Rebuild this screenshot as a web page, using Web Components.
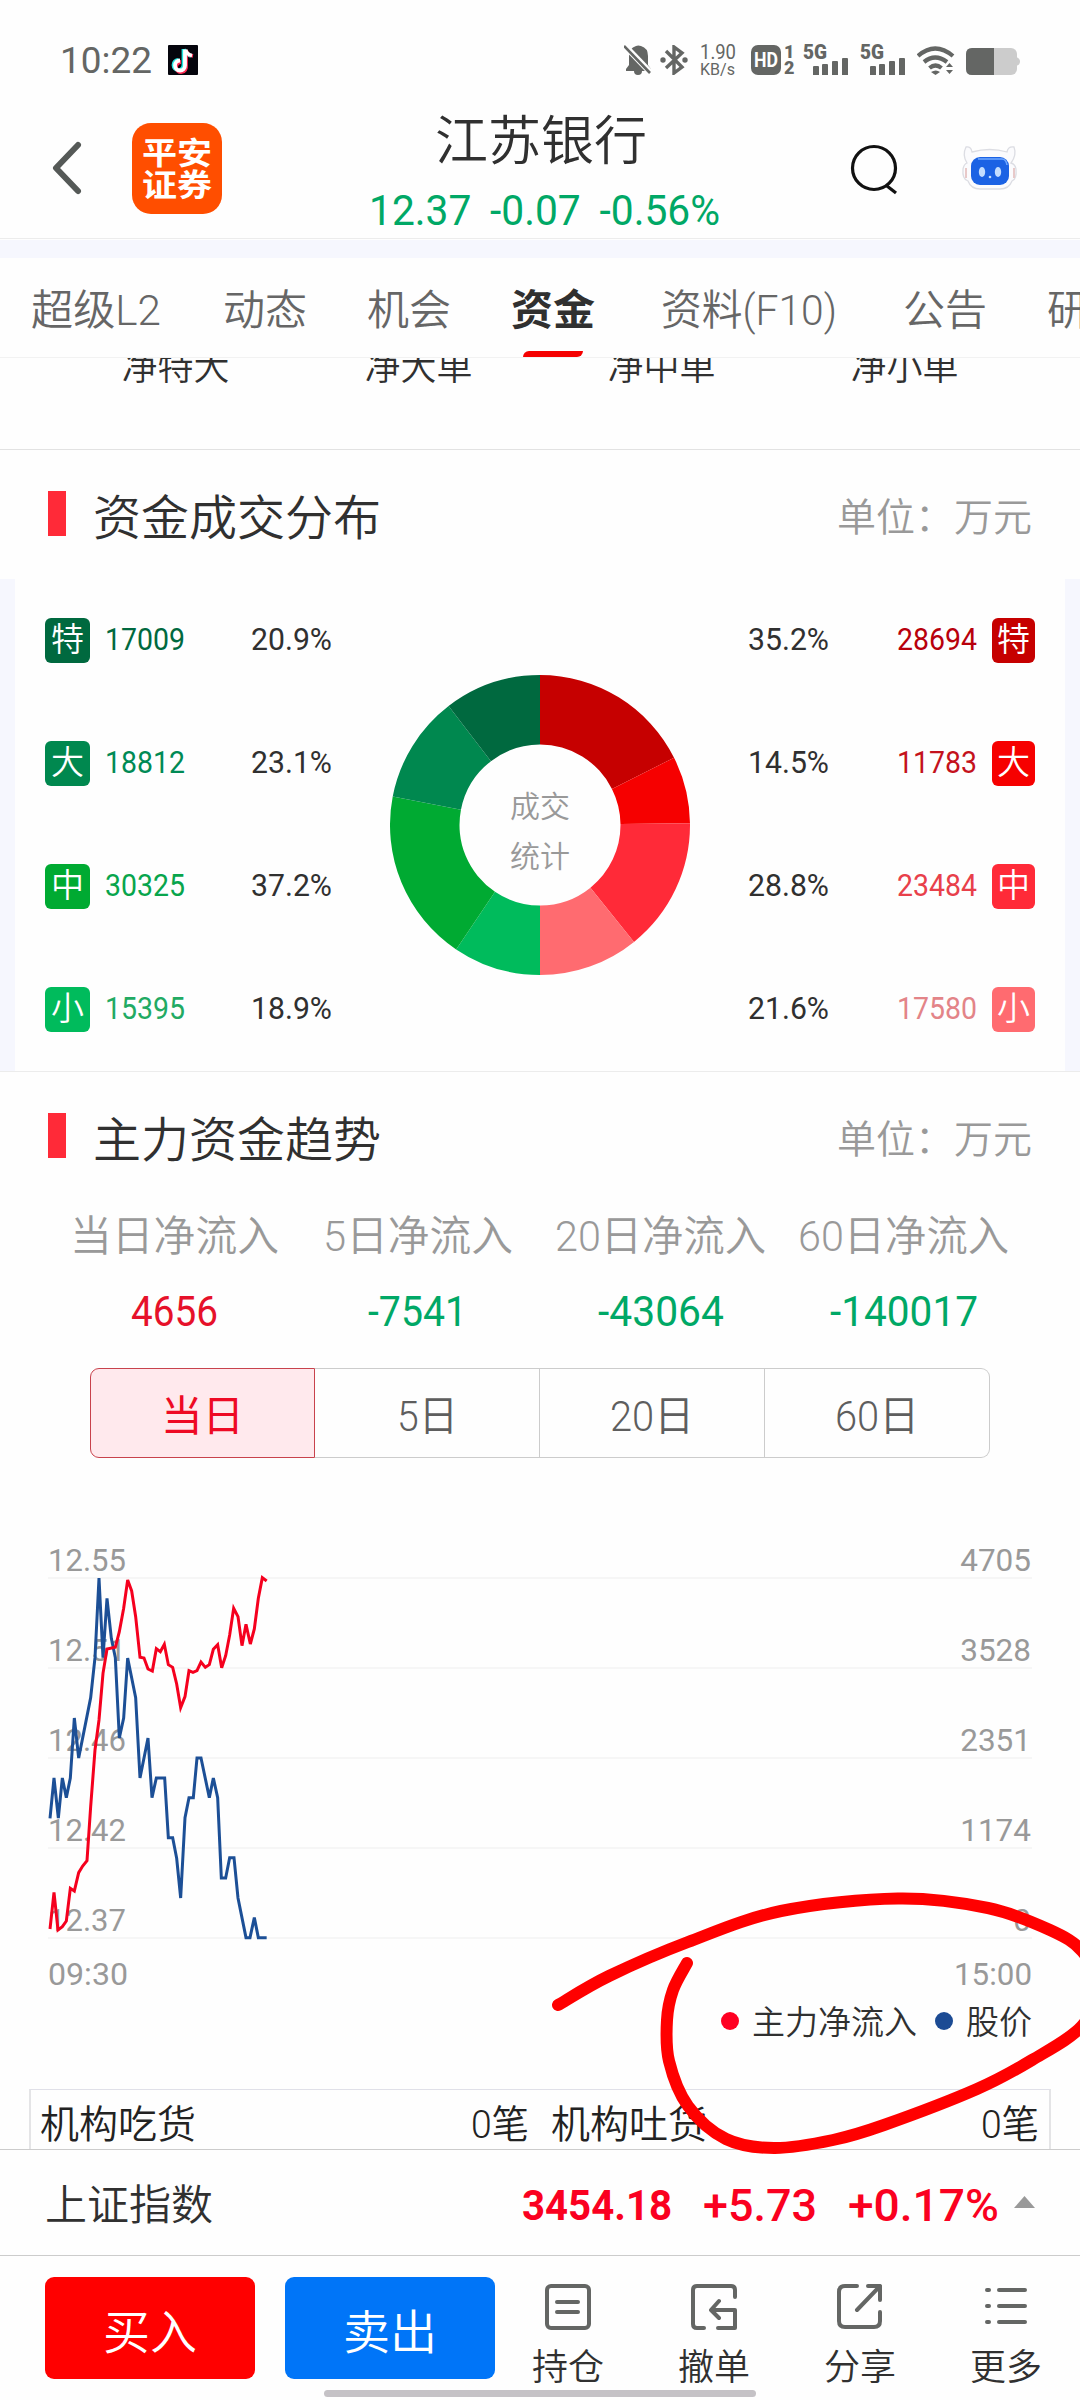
<!DOCTYPE html>
<html lang="zh-CN">
<head>
<meta charset="utf-8">
<title>江苏银行</title>
<style>
html,body{margin:0;padding:0}
body{width:1080px;height:2400px;overflow:hidden;background:#fefefe;color:#303030;
font-family:Roboto,"Noto Sans CJK SC",sans-serif;font-weight:350;line-height:1}
</style>
</head>
<body>
<stock-page></stock-page>
<script>
class BaseElement extends HTMLElement{
constructor(){
  super();
  this.attachShadow({mode:'open'});
}
connectedCallback(){
  this.shadowRoot.innerHTML=`<style>:host{display:block}*{box-sizing:border-box}${this.css()}</style>${this.html()}`;
  this.ready();
}
css(){return ''}
html(){return '<slot></slot>'}
ready(){}
attr(name,def=''){return this.getAttribute(name)||def}
}

// one line of text squeezed or stretched to the width given in "w"
class FitText extends BaseElement{
css(){return `:host{display:block;flex:none;white-space:nowrap;width:${this.attr('w')}px}
span{display:inline-block;transform-origin:0 50%}`}
html(){return '<span><slot></slot></span>'}
ready(){
  const el=this.shadowRoot.querySelector('span');
  const w=el.getBoundingClientRect().width;
  if(w>0)el.style.transform=`scaleX(${Number(this.attr('w'))/w})`;
}
}

class StatusBar extends BaseElement{
css(){return `:host{height:102px;padding:0 60px 0 60px;color:#646664}
.row{display:flex;align-items:flex-start;padding-top:45px}
.time{font-size:37px;line-height:32px;font-weight:400;margin-right:16px}
svg{display:block;flex:none}
.icons{margin-left:auto;display:flex;align-items:flex-start}
.speed{width:38px;margin:0 13px 0 12px;font-size:20px;line-height:15px;font-weight:400}
.speed fit-text+fit-text{font-size:17px;margin-top:2px;line-height:15px}
.hd{display:flex;margin-right:10px}
.hd b{width:30px;height:30px;border-radius:7px;background:#646664;color:#fff;font-size:20px;line-height:31px;padding-left:3px}
.hd div{font-size:18px;font-weight:900;line-height:16px;margin:-1px 0 0 3px;width:9px}
.net{width:45px;margin-right:12px}
.net b{display:block;font-size:20px;line-height:15px;font-weight:900}
.net svg{margin:-2px 0 0 10px}`}
html(){
  const net=`<div class="net"><b><fit-text w="24">5G</fit-text></b><svg width="36" height="17"><path fill="#646664" d="M0 9q0-1 1-1h4q1 0 1 1v8h-6zM9 7q0-1 1-1h4q1 0 1 1v10h-6zM19 4q0-1 1-1h4q1 0 1 1v13h-6zM29 1q0-1 1-1h4q1 0 1 1v16h-6z"/></svg></div>`;
  return `<div class="row"><fit-text class="time" w="92">10:22</fit-text>
<svg width="30" height="30"><rect width="30" height="30" rx="1" fill="#05050d"/>
<g fill="none" stroke-width="3.800"><path stroke="#25e8e4" d="M15.500 4v16a5 5 0 1 1-5-5M16 4q1 6 7 7"/><path stroke="#fe2c55" d="M18 6v15a5 5 0 1 1-5-4M18 5q1 5 7 6" /><path stroke="#fff" d="M17 4.500v16a5 5 0 1 1-5-5M17.500 4.500q1 5 6.500 6"/></g></svg>
<div class="icons">
<svg width="28" height="30" fill="#646664"><path d="M2 26v-2l3-4v-9q0-8 7-10 2-1 5 0 7 2 7 10v9l3 4v2h-9q0 4-4 4t-4-4z"/><path d="M1 1l26 27" stroke="#fefefe" stroke-width="6"/><path d="M0 1l26 27" stroke="#646664" stroke-width="2.600"/></svg>
<svg width="28" height="30" style="margin-left:8px" fill="none" stroke="#646664" stroke-width="3.400"><path d="M6 6l16 16-8 6V2l8 6L6 23"/><circle cx="3" cy="15" r="2.700" fill="#646664" stroke="none"/><circle cx="25" cy="15" r="2.700" fill="#646664" stroke="none"/></svg>
<div class="speed"><fit-text w="36">1.90</fit-text><fit-text w="35">KB/s</fit-text></div>
<div class="hd"><b><fit-text w="24">HD</fit-text></b><div>1<br>2</div></div>
${net}${net}
<svg width="38" height="30"><g fill="none" stroke="#646664" stroke-width="4.200"><path d="M1 11q17-15 35 0"/><path d="M7 17q11-9 23 0"/><path d="M12.500 23q6-5 12 0"/></g><path fill="#646664" d="M14 27q5-3 9 0l-4.500 3zM29 22l3.500-4 3.500 4zM29 25h7l-3.500 4z"/></svg>
<svg width="54" height="28" style="margin:3px 0 0 11px"><rect width="51" height="27" rx="6" fill="#ccc"/><path fill="#ccc" d="M50 9q4 1 4 4.500t-4 4.500z"/><path fill="#646664" d="M6 0h22v27H6q-6 0-6-6V6q0-6 6-6z"/></svg>
</div></div>`}
}

class StockHeader extends BaseElement{
css(){return `:host{height:156px;border-bottom:18px solid #f6f7fe;box-sizing:border-box}
.row{display:flex;height:137px;padding-left:50px;border-bottom:1px solid #ececec}
svg{display:block;flex:none;overflow:visible}
.logo{width:90px;height:91px;margin:21px 147px 0 49px;border-radius:19px;background:#ff4e00;color:#fff;font-size:31px;line-height:32px;font-weight:700;padding:15px 10px}
.mid{width:350px;display:flex;flex-direction:column;align-items:center}
.name{font-size:53px;line-height:56px;margin:12px 6px 0 0}
.price{font-size:42px;line-height:42px;margin-top:20px;color:#00a866;font-weight:400;word-spacing:9px}`}
html(){return `<div class="row">
<svg width="33" height="60" style="margin-top:36px"><path d="M28 7L6 30l22 23" fill="none" stroke="#555957" stroke-width="6" stroke-linecap="round" stroke-linejoin="round"/></svg>
<div class="logo"><fit-text w="70">平安</fit-text><fit-text w="70">证券</fit-text></div>
<div class="mid"><div class="name">江苏银行</div><fit-text class="price" w="351">12.37 -0.07 -0.56%</fit-text></div>
<svg width="50" height="52" style="margin:47px 0 0 131px" fill="none" stroke="#111" stroke-width="3.200"><circle cx="24" cy="19" r="21.500"/><path d="M37 37l9 7"/></svg>
<svg width="54" height="44" style="margin:44px 0 0 63px"><path d="M3 1q5-1 6 5 18-5 35 0 1-6 7-5 3 8-3 16 4 1 5 6 1 10-4 12-3 8-12 8H17q-9 0-12-8-6-2-5-12 1-5 4-6-5-8-1-16z" fill="#fbfbfd" stroke="#dcdde3" stroke-width="1.300"/><path d="M3 22v10M51 22v10" stroke="#e8c9c9" stroke-width="2"/><rect x="8" y="11" width="38" height="28" rx="9" fill="#1b62e4"/><path d="M15 13h24q4 0 5 6" stroke="#6fa8ff" fill="none" stroke-width="1.500"/><ellipse cx="19" cy="26" rx="3.200" ry="5" fill="#c3ddff"/><ellipse cx="35" cy="26" rx="3.200" ry="5" fill="#c3ddff"/><circle cx="27" cy="31" r="1.300" fill="#c3ddff"/></svg>
</div>`}
}

class TabBar extends BaseElement{
css(){return `:host{height:100px;box-sizing:border-box;border-bottom:1px solid #f2f2f2;overflow:hidden}
nav{display:flex;padding-left:31px;width:1200px}
div{flex:none;height:99px;padding-top:32px;font-size:42px;color:#666;display:flex;flex-direction:column}
.on{color:#303030;font-weight:700}
i{width:60px;height:6px;margin:19px 0 0 12px;background:#f50000;border-radius:6px 0 6px 0}`}
html(){
  const tabs=[['超级L2',130,62],['动态',84,60],['机会',84,60],['资金',84,66],['资料(F10)',176,66],['公告',84,60],['研报',84,0]];
  return `<nav>${tabs.map(([t,w,m],i)=>`<div style="margin-right:${m}px" ${i===3?'class="on"':''}><fit-text w="${w}">${t}</fit-text>${i===3?'<i></i>':''}</div>`).join('')}</nav>`}
}

class NetLabels extends BaseElement{
css(){return `:host{height:92px;box-sizing:border-box;overflow:hidden;border-bottom:1px solid #e2e2e2}
.row{display:grid;grid-template-columns:repeat(4,243px);padding-left:54px;margin-top:-8px;text-align:center;font-size:36px;line-height:36px}`}
html(){return `<div class="row">${['净特大','净大单','净中单','净小单'].map(t=>`<span>${t}</span>`).join('')}</div>`}
}

class SectionHead extends BaseElement{
css(){return `:host{height:129px;padding:41px 48px 0 48px;box-sizing:border-box}
.row{display:flex;align-items:center;height:54px}
i{width:18px;height:45px;background:#ff2a38;margin:-9px 27px 0 0}
b{font-size:48px;font-weight:inherit;padding-top:1px}
span{margin-left:auto;font-size:39px;color:#999}`}
html(){return `<div class="row"><i></i><b><slot></slot></b><span>单位：万元</span></div>`}
}

class DealRow extends BaseElement{
css(){return `:host{display:flex;align-items:center;height:45px;font-size:31px;font-weight:400;color:#303030}
:host([side=right]){flex-direction:row-reverse}
i{font-style:normal;width:45px;height:45px;border-radius:6px;background:var(--c);color:#fff;font-size:33px;line-height:44px;text-align:center;font-weight:350}
fit-text{margin-top:-2px}
.n{color:var(--n,var(--c));margin-left:15px;margin-right:15px}
.p{margin-left:51px}
:host([side=right]) .p{margin:-2px 53px 0 0}`}
html(){return `<i>${this.attr('tag')}</i><fit-text class="n" w="80">${this.attr('n')}</fit-text><fit-text class="p" w="81">${this.attr('p')}</fit-text>`}
}

class DonutChart extends BaseElement{
css(){return `svg{display:block}text{font-size:30px;fill:#999;text-anchor:middle}`}
html(){
  const data=[[28694,'#c60000'],[11783,'#f60000'],[23484,'#ff2a38'],[17580,'#ff6b70'],[15395,'#00bb5c'],[30325,'#00aa32'],[18812,'#00884f'],[17009,'#00693f']];
  const total=data.reduce((s,d)=>s+d[0],0);
  const pt=(r,a)=>`${(150+r*Math.sin(a)).toFixed(2)} ${(150-r*Math.cos(a)).toFixed(2)}`;
  let a=0;
  const arcs=data.map(([v,c])=>{
    const b=a+v/total*Math.PI*2;
    const d=`M${pt(150,a)}A150 150 0 0 1 ${pt(150,b)}L${pt(80.5,b)}A80.500 80.500 0 0 0 ${pt(80.5,a)}z`;
    a=b;
    return `<path d="${d}" fill="${c}"/>`;
  }).join('');
  return `<svg width="300" height="300">${arcs}<text x="150" y="142">成交</text><text x="150" y="192">统计</text></svg>`}
}

class DealDistribution extends BaseElement{
css(){return `:host{height:493px;box-sizing:border-box;border-bottom:1px solid #ececec}
.box{display:flex;height:492px;border:solid #f6f7fe;border-width:0 15px;padding:39px 30px 0}
.col{width:287px;display:flex;flex-direction:column;gap:78px}
donut-chart{margin:57px 58px 0}`}
html(){
  const row=(side,[tag,n,p,c,t])=>`<deal-row side="${side}" tag="${tag}" n="${n}" p="${p}" style="--c:${c};--n:${t}"></deal-row>`;
  const sell=[['特','17009','20.9%','#00693f','#00693f'],['大','18812','23.1%','#00884f','#008a55'],['中','30325','37.2%','#00aa32','#08a54c'],['小','15395','18.9%','#00bb5c','#22aa63']];
  const buy=[['特','28694','35.2%','#c60000','#b8000c'],['大','11783','14.5%','#f60000','#c4121c'],['中','23484','28.8%','#ff2a38','#e8404a'],['小','17580','21.6%','#ff6b70','#e38488']];
  return `<div class="box"><div class="col">${sell.map(r=>row('left',r)).join('')}</div><donut-chart></donut-chart><div class="col">${buy.map(r=>row('right',r)).join('')}</div></div>`}
}

class FlowStats extends BaseElement{
css(){return `:host{height:167px}
.row{display:grid;grid-template-columns:repeat(4,243px);padding-left:53px}
.row>div{display:flex;flex-direction:column;align-items:center;font-size:42px;color:#999;padding-top:15px;gap:33px}
.v{color:#00a866;font-weight:400}
.up{color:#e6112a}`}
html(){
  const s=[['当日净流入',209,'4656',87],['5日净流入',190,'-7541',99],['20日净流入',211,'-43064',126],['60日净流入',211,'-140017',148]];
  return `<div class="row">${s.map(([l,w,v,vw],i)=>`<div><fit-text w="${w}">${l}</fit-text><fit-text class="v${i?'':' up'}" w="${vw}">${v}</fit-text></div>`).join('')}</div>`}
}

class SegmentControl extends BaseElement{
css(){return `:host{margin:0 90px}
.row{display:flex}
.row>div{width:225px;height:90px;border:1px solid #ccc;border-left-width:0;display:flex;justify-content:center;align-items:center;font-size:42px;color:#5e5e5e;padding-top:7px}
.row>.on{background:#ffe9ed;border:1px solid #c8424c;border-radius:9px 0 0 9px;color:#ee0a24;font-weight:400}
.row>:last-child{border-radius:0 9px 9px 0}`}
html(){return `<div class="row"><div class="on"><fit-text w="83">当日</fit-text></div><div><fit-text w="61">5日</fit-text></div><div><fit-text w="84">20日</fit-text></div><div><fit-text w="84">60日</fit-text></div></div>`}
}

class TrendChart extends BaseElement{
css(){return `:host{height:537px;padding-top:72px;box-sizing:border-box}
svg{display:block}
text{font-size:31.500px;fill:#999;font-weight:400}
.legend{display:flex;justify-content:flex-end;align-items:center;height:40px;margin:-8px 48px 0;font-size:33px}
.legend i{width:18px;height:18px;border-radius:9px;background:#ff0022;margin:-3px 13px 0 18px}
.legend i+span+i{background:#1c4b94}`}
html(){
  const left=['12.55','12.51','12.46','12.42','12.37'];
  const right=['4705','3528','2351','1174','0'];
  const grid=left.map((t,i)=>`<path d="M48 ${48+i*90}H1032" stroke="#f6f6f6" stroke-width="2"/>
<text x="48" y="${41+i*90}" textLength="78" lengthAdjust="spacingAndGlyphs">${t}</text><text x="1031" y="${41+i*90}" text-anchor="end">${right[i]}</text>`).join('');
  // both series in thirds of a pixel, counted from the top of the svg
  const price='150 865 162 744 175 864 187 744 199 803 211 744 223 564 236 684 272 503 285 383 297 144 309 383 321 205 334 325 346 383 358 624 371 564 383 384 407 503 420 744 444 624 456 803 469 744 494 744 505 923 518 923 530 985 542 1104 555 863 567 803 580 803 591 684 603 684 628 803 640 744 653 803 664 1044 677 1044 689 983 702 983 714 1104 738 1223 750 1223 763 1163 775 1223 800 1223';
  const flow='150 1197 162 1087 174 1200 187 1190 199 1173 211 1075 223 1083 236 1028 248 1008 261 992 272 830 285 660 297 570 309 430 321 357 346 352 358 305 371 235 383 150 395 183 407 260 420 382 432 384 444 417 457 423 469 356 481 365 493 343 505 404 518 412 530 462 542 533 555 500 567 422 579 427 591 422 603 396 616 412 628 404 640 358 653 344 665 413 677 377 689 315 701 235 714 260 726 347 738 283 751 342 763 297 775 205 787 143 800 153';
  return `<svg width="1080" height="480">${grid}
<text x="48" y="455" textLength="80" lengthAdjust="spacingAndGlyphs">09:30</text><text x="1032" y="455" text-anchor="end" textLength="78" lengthAdjust="spacingAndGlyphs">15:00</text>
<g transform="scale(.33333)" fill="none" stroke-width="9"><polyline points="${price}" stroke="#1c4f96"/><polyline points="${flow}" stroke="#f5001e"/></g></svg>
<div class="legend"><i></i><span>主力净流入</span><i></i><span>股价</span></div>`}
}

class OrgTable extends BaseElement{
css(){return `:host{height:154px;padding:94px 29px 0;box-sizing:border-box;overflow:hidden}
.row{display:flex;align-items:center;height:80px;border:2px solid #e4e4e6;border-top:1px solid #e0e0e8;font-size:39px;color:#222;padding:0 10px 6px 9px}
.gap{margin-left:auto}
.mid{margin-left:22px}`}
html(){return `<div class="row"><fit-text w="156">机构吃货</fit-text><fit-text class="gap" w="58">0笔</fit-text><fit-text class="mid" w="156">机构吐货</fit-text><fit-text class="gap" w="58">0笔</fit-text></div>`}
}

class IndexBar extends BaseElement{
css(){return `:host{height:107px;border:solid #ccc;border-width:1px 0;box-sizing:border-box;padding:0 45px 0 45px;background:#fefefe}
.row{display:flex;align-items:center;height:105px;padding-top:6px;font-size:42px}
.v{color:#fa0020;font-size:43px;font-weight:700;margin-left:auto}
.v.c{font-weight:500;margin-left:31px;font-size:44px}
svg{margin:-8px 0 0 15px}`}
html(){return `<div class="row"><span>上证指数</span><fit-text class="v" w="150">3454.18</fit-text><fit-text class="v c" w="114">+5.73</fit-text><fit-text class="v c" w="151">+0.17%</fit-text><svg width="21" height="12"><path d="M0 12L10.500 0 21 12z" fill="#999"/></svg></div>`}
}

class ActionBar extends BaseElement{
css(){return `:host{height:144px}
.row{display:flex;padding:21px 0 0 45px}
.btn{width:210px;height:102px;border-radius:9px;background:#f00;color:#fff;font-size:47px;line-height:112px;text-align:center;margin-right:30px;flex:none}
.sell{background:#0075f8;margin-right:0}
.item{width:146px;flex:none;display:flex;flex-direction:column;align-items:center;padding-top:7px;font-size:36px;gap:20px}
svg{display:block;fill:none;stroke:#646664;stroke-width:4;stroke-linecap:round;stroke-linejoin:round}`}
html(){
  const items=[
    ['持仓','<rect x="2" y="2" width="42" height="42" rx="4"/><path d="M12 18h21M12 28h21"/>'],
    ['撤单','<path d="M44 13V6q0-4-4-4H6Q2 2 2 6v34q0 4 4 4h7M27 44h17V26H21M28 17l-8 9 8 8"/>'],
    ['分享','<path d="M20 2H8Q2 2 2 8v29q0 6 6 6h29q6 0 6-6V28M31 2h12v14M43 2L20 26"/>'],
    ['更多','<path d="M4 6h2M16 6h26M4 22h2M16 22h26M4 38h2M16 38h26"/>']];
  return `<div class="row"><div class="btn">买入</div><div class="btn sell">卖出</div>${items.map(([t,p])=>`<div class="item"><svg width="46" height="46">${p}</svg><span>${t}</span></div>`).join('')}</div>`}
}

// hand drawn marker stroke, smoothed through its points
class MarkerStroke extends BaseElement{
css(){return `:host{position:absolute;left:0;top:0;pointer-events:none}svg{display:block}`}
html(){
  const p=[[558,2005],[609,1976],[688,1942],[781,1911],[898,1898.5],[988,1908],[1050,1930],[1082,1951],[1098,1985],[1082,2026],[1032,2060],[977,2089],[884,2125],[833,2140],[774,2148],[726,2139],[688,2106],[669,2061],[667,2020],[673,1990],[687,1963]];
  let d=`M${p[0]}`;
  for(let i=0;i<p.length-1;i++){
    const a=p[i-1]||p[i],b=p[i],c=p[i+1],e=p[i+2]||c;
    d+=`C${b[0]+(c[0]-a[0])/6} ${b[1]+(c[1]-a[1])/6} ${c[0]-(e[0]-b[0])/6} ${c[1]-(e[1]-b[1])/6} ${c[0]} ${c[1]}`;
  }
  return `<svg width="1080" height="2400"><path d="${d}" fill="none" stroke="#f00" stroke-width="12" stroke-linecap="round"/></svg>`}
}

class StockPage extends BaseElement{
css(){return `:host{position:relative;width:1080px;height:2400px;overflow:hidden}
main{display:flex;flex-direction:column}
main>*{flex:none}
.home{position:absolute;left:324px;top:2390px;width:432px;height:7px;border-radius:4px;background:#c5c2c6}`}
html(){return `<main>
<status-bar></status-bar>
<stock-header></stock-header>
<tab-bar></tab-bar>
<net-labels></net-labels>
<section-head>资金成交分布</section-head>
<deal-distribution></deal-distribution>
<section-head>主力资金趋势</section-head>
<flow-stats></flow-stats>
<segment-control></segment-control>
<trend-chart></trend-chart>
<org-table></org-table>
<index-bar></index-bar>
<action-bar></action-bar>
</main><div class="home"></div><marker-stroke></marker-stroke>`}
}

customElements.define('fit-text',FitText);
customElements.define('status-bar',StatusBar);
customElements.define('stock-header',StockHeader);
customElements.define('tab-bar',TabBar);
customElements.define('net-labels',NetLabels);
customElements.define('section-head',SectionHead);
customElements.define('deal-row',DealRow);
customElements.define('donut-chart',DonutChart);
customElements.define('deal-distribution',DealDistribution);
customElements.define('flow-stats',FlowStats);
customElements.define('segment-control',SegmentControl);
customElements.define('trend-chart',TrendChart);
customElements.define('org-table',OrgTable);
customElements.define('index-bar',IndexBar);
customElements.define('action-bar',ActionBar);
customElements.define('marker-stroke',MarkerStroke);
customElements.define('stock-page',StockPage);
</script>
</body>
</html>
